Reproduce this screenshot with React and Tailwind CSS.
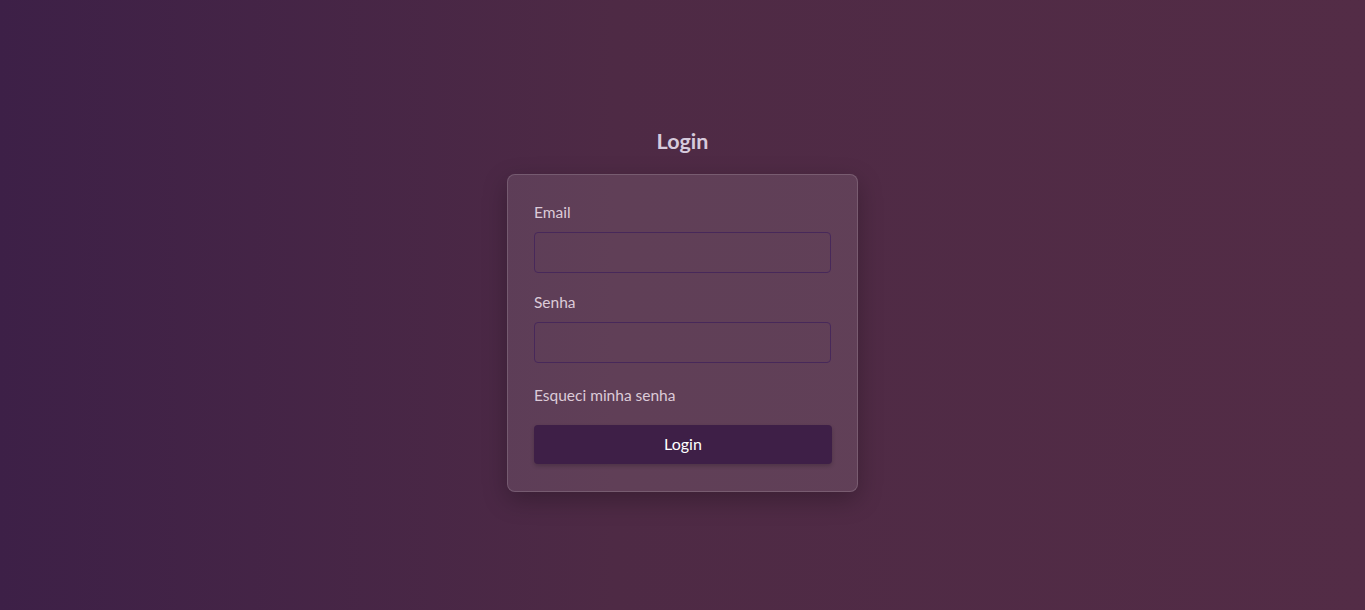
export default function App() {
  return (
    <div
      className="min-h-screen w-full flex flex-col items-center justify-center bg-[linear-gradient(to_right,#3d2047_0%,#4e2a45_45%,#532c46_100%)]"
      style={{ fontFamily: 'Lato, "Noto Sans", sans-serif' }}
    >
      <h1 className="text-[21.5px] leading-[28px] font-bold text-[#d6cadc] mb-[19px] mt-[8px]">Login</h1>
      <div className="w-[351px] rounded-[8px] border border-white/15 bg-white/10 shadow-[0_8px_24px_rgba(0,0,0,0.25)] px-[26px] pt-[27px] pb-[27px]">
        <label className="block text-[15.5px] leading-[20px] text-[#dccbd8]">Email</label>
        <input className="mt-[10px] block w-full h-[41px] rounded-[4px] border border-[#47285a] bg-transparent outline-none" />
        <label className="block mt-[19px] text-[15.5px] leading-[20px] text-[#dccbd8]">Senha</label>
        <input type="password" className="mt-[10px] block w-full h-[41px] rounded-[4px] border border-[#47285a] bg-transparent outline-none" />
        <div className="mt-[22px] text-[15.5px] leading-[20px] text-[#dccbd8]">Esqueci minha senha</div>
        <button className="mt-[20px] block w-[298px] h-[39px] rounded-[4px] bg-[#3e1f47] text-white text-[16px] shadow-[0_2px_4px_rgba(0,0,0,0.2)]">Login</button>
      </div>
    </div>
  );
}
